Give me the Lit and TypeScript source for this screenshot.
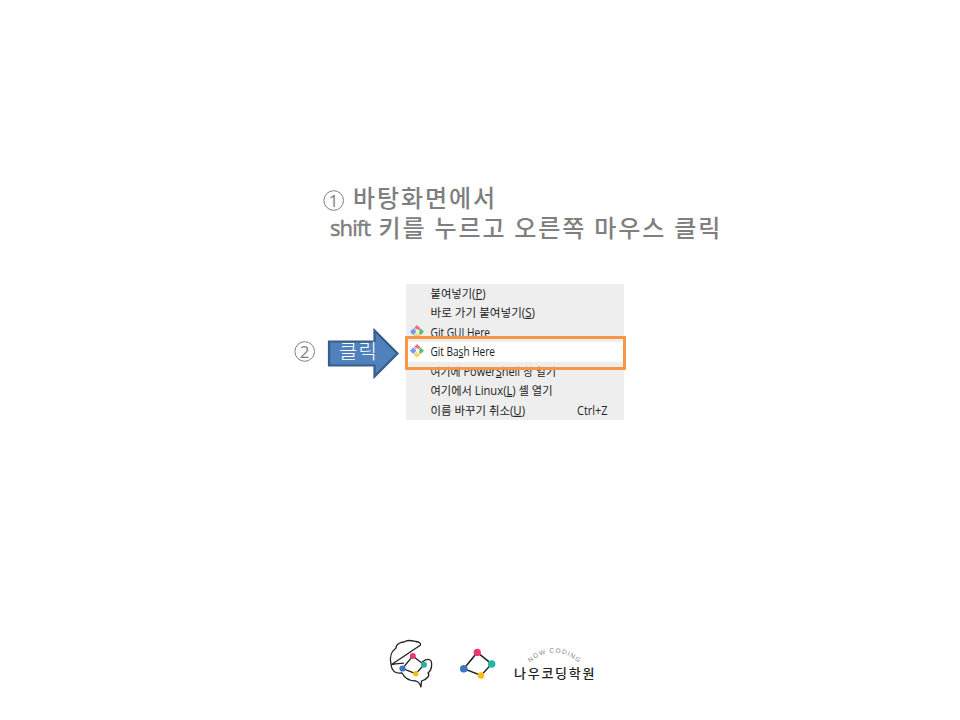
import { LitElement, html, css, svg } from "lit";
import { customElement } from "lit/decorators.js";

const gitIcon = html`<svg class="git" viewBox="0 0 14 14" width="14" height="14">
  <path d="M7 0 10.4 3.3 8.9 5 7.2 4.6 5.8 5.3 3.6 3.3Z" fill="#f0727c" />
  <path d="M3.2 3.6 6.4 6.8 3.2 10 0 6.8Z" fill="#6b9bf5" />
  <path d="M10.7 3.6 14 6.8 10.7 10 8.7 8.1 9.8 6.8 9 5.4Z" fill="#62bd68" />
  <path d="M6.9 7.4 10.3 10.4 7 13.8 3.6 10.4Z" fill="#fbd35b" />
  <path d="M4.6 2.6 7.4 5.4V9.6" stroke="#fff" stroke-width=".8" fill="none" />
</svg>`;

const rows = [
  { cls: "r1", icon: false, a: "붙여넣기(", key: "P", b: ")", w: 55, hot: "" },
  { cls: "r2", icon: false, a: "바로 가기 붙여넣기(", key: "S", b: ")", w: 104.5, hot: "" },
  { cls: "r3", icon: true, a: "Git G", key: "U", b: "I Here", w: 59.5, hot: "" },
  { cls: "r4", icon: true, a: "Git Ba", key: "s", b: "h Here", w: 64.5, hot: "" },
  { cls: "r5", icon: false, a: "여기에 Power", key: "S", b: "hell 창 열기", w: 125.5, hot: "" },
  { cls: "r6", icon: false, a: "여기에서 Linux(", key: "L", b: ") 셸 열기", w: 122, hot: "" },
  { cls: "r7", icon: false, a: "이름 바꾸기 취소(", key: "U", b: ")", w: 94.5, hot: "Ctrl+Z" },
];

const network = (scale: number, w: number) => svg`
  <path d="M0 17 14 0 29 12 18 24Z" fill="none" stroke="#222" stroke-width=${w} />
  <circle cx="14" cy="0" r=${scale} fill="#e8396b" />
  <circle cx="29" cy="12" r=${scale + 0.1} fill="#25b5a5" />
  <circle cx="18" cy="24" r=${scale - 0.4} fill="#fcbd10" />
  <circle cx="0" cy="17" r=${scale + 0.2} fill="#3a78c3" />`;

@customElement("app-root")
export class AppRoot extends LitElement {
  static styles = css`
    :host {
      display: flex;
      flex-direction: column;
      box-sizing: border-box;
      width: 960px;
      height: 720px;
      overflow: hidden;
      background: #fff;
      font-family: "Noto Sans CJK KR", sans-serif;
    }
    .title {
      margin: 182px 0 0 323px;
      height: 102px;
      color: #7f7f7f;
      font-size: 24px;
      font-weight: 500;
      line-height: 30px;
      letter-spacing: 1.92px;
      word-spacing: 0.6px;
      white-space: nowrap;
    }
    .line {
      display: flex;
      height: 29.5px;
    }
    .num {
      display: block;
      width: 21px;
      height: 21px;
      overflow: visible;
    }
    .line .num { margin: 8px 9px 0 0; }
    .latin {
      width: 48.5px;
      margin-left: 7px;
      font-family: "Open Sans", sans-serif;
      font-size: 22px;
      letter-spacing: -0.9px;
      -webkit-text-stroke: 0.5px #7f7f7f;
    }
    .work {
      display: flex;
      height: 136px;
    }
    .step {
      display: flex;
      margin: 43px 0 0 294px;
      width: 112px;
    }
    .step > .num { margin-top: 14px; }
    .arrow {
      display: block;
      margin-left: 12px;
      width: 74px;
      height: 54px;
      overflow: visible;
    }
    .menu {
      position: relative;
      width: 218px;
      height: 136px;
      background: #eee;
    }
    .row {
      display: flex;
      box-sizing: border-box;
      height: 19.43px;
    }
    .slot {
      width: 25px;
      padding: 2px 0 0 4px;
      box-sizing: border-box;
      flex: none;
    }
    .git { display: block; }
    .label { display: block; flex: none; width: 193px; height: 19px; overflow: visible; }
    .label text {
      font-family: "Open Sans", "Noto Sans CJK KR", sans-serif;
      font-size: 11.7px;
      fill: #222;
      white-space: pre;
    }
    .key { text-decoration: underline; text-underline-offset: 1px; text-decoration-thickness: 1px; }
    .r4 { background: #fff; }
    .r5 { clip-path: inset(5px 0 0 0); }
    .focus {
      position: absolute;
      left: -1px;
      top: 52px;
      width: 221px;
      height: 34px;
      box-sizing: border-box;
      border: 3px solid #f79646;
      border-radius: 1px;
    }
    .brand {
      display: flex;
      margin: 216px 0 0 386px;
      height: 60px;
    }
    .brand svg { display: block; flex: none; }
  `;

  private circled(n: string) {
    return html`<svg class="num" viewBox="0 0 21 21">
      <circle cx="10.7" cy="10.5" r="9.8" fill="none" stroke="#7f7f7f" stroke-width="1" />
      <text x="10.7" y="16.5" text-anchor="middle" font-size="17" font-weight="400" fill="#7f7f7f"
        font-family="Open Sans" style="letter-spacing:0">${n}</text>
    </svg>`;
  }

  render() {
    return html`
      <div class="title">
        <div class="line">${this.circled("1")}<span>바탕화면에서</span></div>
        <div class="line"><span class="latin">shift</span><span>키를 누르고 오른쪽 마우스 클릭</span></div>
      </div>
      <div class="work">
        <div class="step">
          ${this.circled("2")}
          <svg class="arrow" viewBox="0 0 74 54">
            <path d="M2 14.5H47.5V3.5L70.5 26.5 47.5 49.5V38.5H2Z" fill="#4f81bd" stroke="#385d8a" stroke-width="2.2" />
            <text x="12" y="31.5" font-size="20" letter-spacing="1" fill="#fff" font-family="Noto Sans CJK KR" font-weight="300">클릭</text>
          </svg>
        </div>
        <div class="menu">
          ${rows.map(
            (r) => html`<div class="row ${r.cls}">
              <span class="slot">${r.icon ? gitIcon : ""}</span>
              <svg class="label">
                <text x="-0.5" y="13.8" textLength=${r.w} lengthAdjust="spacingAndGlyphs">${r.a}<tspan class="key">${r.key}</tspan>${r.b}</text>
                ${r.hot ? svg`<text x="146" y="13.8" textLength="30.5" lengthAdjust="spacingAndGlyphs">${r.hot}</text>` : ""}
              </svg>
            </div>`
          )}
          <div class="focus"></div>
        </div>
      </div>
      <div class="brand">
        <svg width="64" height="56" viewBox="386 636 64 56">
          <path d="M391 664.5C389 657 392 651 396 648 396 644 401 642 404 642 408 639 413 641 416 641.5 419 642 421 643 420.5 645Q415 649 391.5 664.5C397 663 403 663.5 404 663M391 665C392 671 395 674 402 673 405 679 411 681 416 681 419 682 420 684 421 687L421.5 681C428 679 430 675 428 673 433 669 432 661 430 660Q427 658 422 662" fill="none" stroke="#222" stroke-width="1.3" stroke-linejoin="round" />
          <g transform="translate(402.5 668.5) scale(.74 .74) translate(0 -17)">${network(4, 1.7)}</g>
        </svg>
        <svg width="56" height="56" viewBox="450 636 56 56">
          <g transform="translate(463.8 652.4) scale(.96)">${network(3.8, 1.6)}</g>
        </svg>
        <svg width="96" height="56" viewBox="506 636 96 56">
          <defs><path id="arc" d="M530 662.5Q553.5 642.5 578.5 662.5" /></defs>
          <text font-family="Liberation Sans" font-size="6.5" letter-spacing="1.1" fill="#858585">
            <textPath href="#arc">NOW CODING</textPath>
          </text>
          <text x="514" y="677.5" font-family="Noto Sans CJK KR" font-size="13" font-weight="500" fill="#222" textLength="80.5">나우코딩학원</text>
        </svg>
      </div>
    `;
  }
}
